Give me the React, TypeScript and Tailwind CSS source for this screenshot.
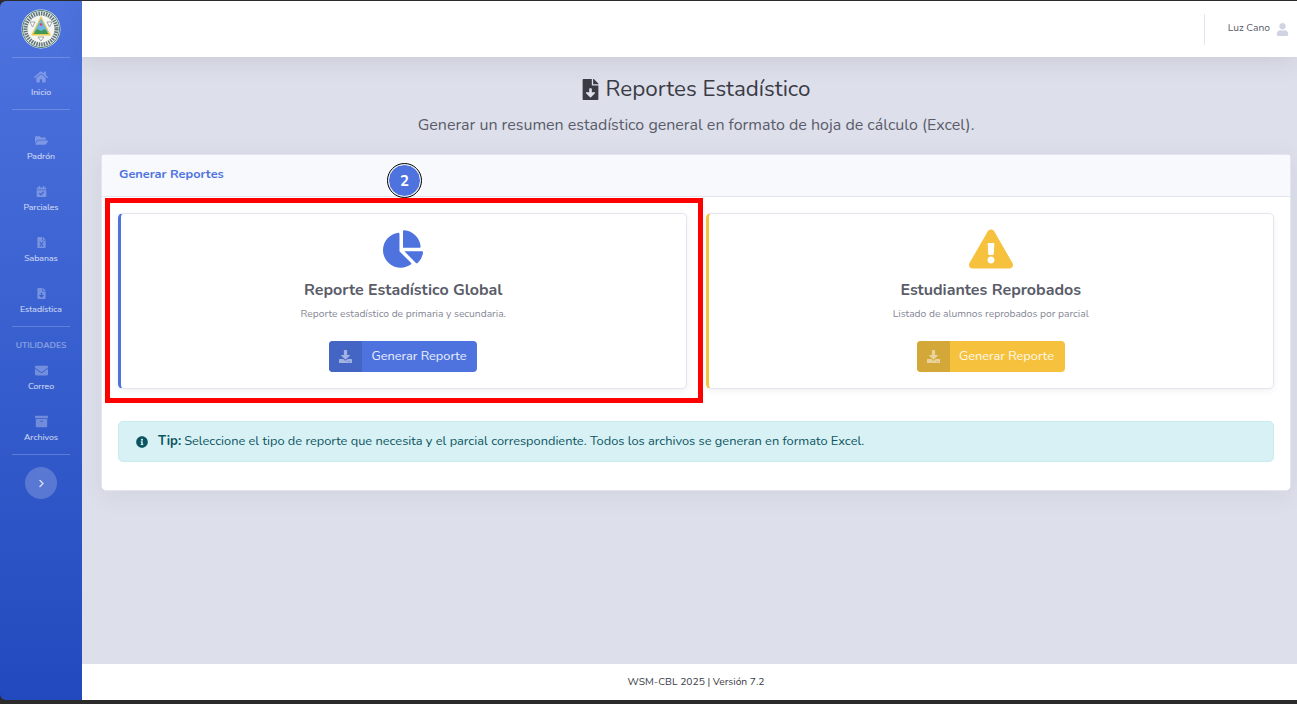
import {
  FaArchive,
  FaCalendarCheck,
  FaChartPie,
  FaChevronRight,
  FaDownload,
  FaEnvelope,
  FaExclamationTriangle,
  FaFileDownload,
  FaFileExcel,
  FaFolderOpen,
  FaHome,
  FaInfoCircle,
  FaUser,
} from "react-icons/fa";
import type { IconType } from "react-icons";

const font = "font-['Nunito','Noto_Sans','Open_Sans',sans-serif]";

function Logo() {
  return (
    <svg width="40" height="40" viewBox="0 0 40 40">
      <circle cx="20" cy="20" r="19.5" fill="#e8efe9" />
      <circle cx="20" cy="20" r="18.5" fill="none" stroke="#4d7f78" strokeWidth="1" />
      <circle cx="20" cy="20" r="15.5" fill="none" stroke="#3a4a55" strokeWidth="4" strokeDasharray="1.5 1" opacity="0.75" />
      <circle cx="20" cy="20" r="13" fill="#f4f6f2" />
      <path d="M9 13 L14 13 L11.5 18 Z M26 13 L31 13 L28.5 18 Z M17 28 L23 28 L20 32 Z" fill="#fff" stroke="#8a9296" strokeWidth="0.8" />
      <path d="M20 7 L30 26.5 L10 26.5 Z" fill="#eac94c" />
      <path d="M20 9.5 L27 23 L13 23 Z" fill="#6fb5e2" />
      <path d="M12.5 25 L16 20 L20 22 L24 20 L27.5 25 Z" fill="#3f9a58" />
      <circle cx="20" cy="15.5" r="1.3" fill="#d8445c" />
    </svg>
  );
}

function Rule() {
  return <div className="mx-3 h-px bg-white/20" />;
}

function NavItem({ icon: Icon, label, size = 13 }: { icon: IconType; label: string; size?: number }) {
  return (
    <div className="flex h-[51px] flex-col items-center pt-[12px]">
      <div className="flex h-[15px] items-center text-white/30">
        <Icon size={size} />
      </div>
      <span className="mt-[1px] text-[8.75px] leading-[14px] text-white/80">{label}</span>
    </div>
  );
}

function Sidebar() {
  return (
    <aside className="flex w-[82px] shrink-0 flex-col rounded-tl-md rounded-bl-md bg-gradient-to-b from-[#4e73df] to-[#224abe]">
      <div className="flex h-[56px] items-center justify-center pb-[1px]">
        <Logo />
      </div>
      <Rule />
      <div className="flex h-[51px] flex-col items-center pt-[11px]">
        <div className="flex h-[15px] items-center text-white/30">
          <FaHome size={14} />
        </div>
        <span className="mt-[1px] text-[8.75px] leading-[14px] text-white/80">Inicio</span>
      </div>
      <Rule />
      <div className="h-[11px]" />
      <div>
        <NavItem icon={FaFolderOpen} label="Padrón" />
        <NavItem icon={FaCalendarCheck} label="Parciales" size={11} />
        <NavItem icon={FaFileExcel} label="Sabanas" size={11} />
        <NavItem icon={FaFileDownload} label="Estadística" size={11} />
      </div>
      <div className="h-px" />
      <Rule />
      <div className="mt-[12px] text-center text-[8.5px] font-bold leading-[12px] text-white/40">UTILIDADES</div>
      <div>
        <NavItem icon={FaEnvelope} label="Correo" />
        <NavItem icon={FaArchive} label="Archivos" />
      </div>
      <div className="h-px" />
      <Rule />
      <button className="mx-auto mt-[12px] flex h-8 w-8 items-center justify-center rounded-full bg-white/20 text-white/75">
        <FaChevronRight size={9} />
      </button>
    </aside>
  );
}

function Topbar() {
  return (
    <header className="flex h-[56px] shrink-0 items-center justify-end bg-white pr-[8px] shadow-[0_4px_24px_rgba(58,59,69,0.12)]">
      <div className="flex items-center">
        <div className="h-[31px] w-px bg-[#e3e6f0]" />
        <span className="ml-[23px] text-[10.25px] text-[#5a5c69]">Luz Cano</span>
        <FaUser size={13} className="ml-[6px] text-[#d1d3e2]" />
      </div>
    </header>
  );
}

function ReportCard({
  border,
  icon,
  title,
  text,
  btn,
  btnDark,
}: {
  border: string;
  icon: React.ReactNode;
  title: string;
  text: string;
  btn: string;
  btnDark: string;
}) {
  return (
    <div className={`flex h-[176px] flex-1 flex-col items-center rounded-[5px] border border-l-[3px] border-[#e3e6f0] bg-white shadow-[0_2px_6px_rgba(58,59,69,0.07)] ${border}`}>
      <div className="mt-[15px] flex h-[40px] items-center justify-center">{icon}</div>
      <h3 className="mt-[11px] text-[16px] font-bold leading-[20px] text-[#5a5c69]">{title}</h3>
      <p className="mt-[7px] text-[10.25px] leading-[14px] text-[#858796]">{text}</p>
      <button className={`mt-[20px] flex h-[31px] items-center overflow-hidden rounded-[4px] text-[12.75px] text-white/90 ${btn}`}>
        <span className={`flex h-full w-[33px] items-center justify-center text-white/50 ${btnDark}`}>
          <FaDownload size={13} />
        </span>
        <span className="pr-[11px] pl-[9.5px]">Generar Reporte</span>
      </button>
    </div>
  );
}

export default function App() {
  return (
    <div className={`relative flex h-[704px] w-[1297px] flex-col overflow-hidden bg-[#2b2b2b] pt-px pb-[4px] ${font}`}>
      <div className="flex min-h-0 flex-1">
        <Sidebar />
        <div className="flex min-w-0 flex-1 flex-col bg-[#dddfeb]">
          <Topbar />
          <main className="flex-1 pr-[6px] pl-[19px]">
            <div className="mt-[17px] flex items-center justify-center pr-[2px] text-[#3a3b45]">
              <FaFileDownload size={21} />
              <h1 className="ml-[5px] text-[22.4px] leading-[30px]">Reportes Estadístico</h1>
            </div>
            <p className="mt-[11px] text-center text-[16px] leading-[20px] text-[#5a5c69]">
              Generar un resumen estadístico general en formato de hoja de cálculo (Excel).
            </p>
            <section className="mt-[19px] h-[337px] rounded-[5px] border border-[#e3e6f0] bg-white shadow-[0_4px_24px_rgba(58,59,69,0.08)]">
              <div className="flex h-[42px] items-center border-b border-[#e3e6f0] bg-[#f8f9fc] px-[17px] pb-[1px]">
                <h2 className="text-[12.75px] font-bold text-[#4e73df]">Generar Reportes</h2>
              </div>
              <div className="px-[16px] pt-[16px]">
                <div className="flex gap-[19px]">
                  <ReportCard
                    border="border-l-[#4e73df]"
                    icon={<FaChartPie size={40} className="text-[#4e73df]" />}
                    title="Reporte Estadístico Global"
                    text="Reporte estadístico de primaria y secundaria."
                    btn="bg-[#4e73df]"
                    btnDark="bg-[#4565c4]"
                  />
                  <ReportCard
                    border="border-l-[#f6c23e]"
                    icon={<FaExclamationTriangle size={44} className="text-[#f6c23e]" />}
                    title="Estudiantes Reprobados"
                    text="Listado de alumnos reprobados por parcial"
                    btn="bg-[#f6c23e]"
                    btnDark="bg-[#d3a738]"
                  />
                </div>
                <div className="mt-[32px] flex h-[41px] items-center rounded-[5px] border border-[#c8ebf0] bg-[#d7f1f5] pl-[17px] text-[12.8px] text-[#0c5460]">
                  <FaInfoCircle size={12} />
                  <strong className="ml-[10px] mr-[3px] text-[13px]">Tip:</strong>
                  Seleccione el tipo de reporte que necesita y el parcial correspondiente. Todos los archivos se generan en formato Excel.
                </div>
              </div>
            </section>
          </main>
          <footer className="flex h-[36px] shrink-0 items-center justify-center bg-white pt-px pl-[13px] text-[10.25px] text-[#3a3b45]">
            WSM-CBL 2025 | Versión 7.2
          </footer>
        </div>
      </div>

      {/* annotation layer drawn over the screenshot */}
      <div className="pointer-events-none absolute top-[198px] left-[105px] h-[205px] w-[598px] border-[5px] border-[#ff0000]" />
      <div className="absolute top-[164px] left-[388px] flex h-[33px] w-[33px] items-center justify-center rounded-full border border-white bg-[#4e73df] pt-px text-[15px] font-bold text-white outline outline-1 outline-black">
        2
      </div>
    </div>
  );
}
